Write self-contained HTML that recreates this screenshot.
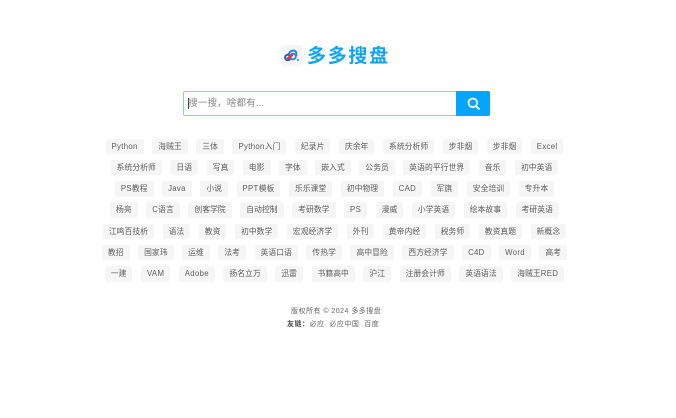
<!DOCTYPE html>
<html lang="zh"><head><meta charset="utf-8"><title>多多搜盘</title>
<style>
*{box-sizing:border-box}
html,body{margin:0;padding:0;width:676px;height:418px;overflow:hidden;background:#fff;font-family:"Liberation Sans","Noto Sans CJK SC",sans-serif}
.abs{position:absolute}
.row{position:absolute;left:0;width:669px;display:flex;justify-content:center;gap:8.5px;height:15.5px}
.row a{display:block;height:15.5px;line-height:15.5px;padding:0 6px;background:#f5f5f5;border-radius:2px;font-size:7.8px;letter-spacing:.05px;color:#5c5c5c;white-space:nowrap}
.row i{font-style:normal;letter-spacing:.32px}
</style></head><body>
<svg class="abs" style="left:281px;top:45px" width="21" height="21" viewBox="0 0 21 21">
<rect width="21" height="21" rx="3" fill="#f3f5f8"/>
<path d="M7.500 9C9 6.500 11 5.500 12.500 5.500c2.500 0 3 2.500 3 4.500" fill="none" stroke="#2d86de" stroke-width="2" stroke-linecap="round"/>
<circle cx="6.800" cy="12.500" r="2.700" fill="none" stroke="#1a64c4" stroke-width="2"/>
<circle cx="12" cy="11.500" r="2.800" fill="none" stroke="#2d86de" stroke-width="1.800"/>
<path d="M6.500 14L11 10" stroke="#ee3535" stroke-width="2.600" stroke-linecap="round"/>
<circle cx="17" cy="15" r="1" fill="#2d86de"/>
</svg>
<div class="abs" style="left:307px;top:43.500px;font-size:19px;line-height:26px;font-weight:700;letter-spacing:1.700px;color:#0fa3f5;white-space:nowrap">多多搜盘</div>

<div class="abs" style="left:183px;top:91px;width:307px;height:25px;border:1px solid #85cdfb;border-radius:2px;background:#fff"></div>
<div class="abs" style="left:188px;top:98px;width:1px;height:11px;background:#444"></div>
<div class="abs" style="left:188px;top:96px;font-size:9.700px;line-height:15px;color:#8a8a8a;white-space:nowrap">搜一搜，啥都有...</div>
<div class="abs" style="left:456px;top:91px;width:34px;height:25px;background:#03a5ff;border-radius:0 2px 2px 0"></div>
<svg class="abs" style="left:466px;top:96px" width="15" height="15" viewBox="0 0 15 15"><circle cx="6.800" cy="6.800" r="4.300" fill="none" stroke="#fff" stroke-width="1.800"/><path d="M10 10l3 3" stroke="#fff" stroke-width="1.800" stroke-linecap="round"/></svg>

<div class="row" style="top:138.500px"><a><i>Python</i></a><a>海贼王</a><a>三体</a><a><i>Python</i>入门</a><a>纪录片</a><a>庆余年</a><a>系统分析师</a><a>步非烟</a><a>步非烟</a><a><i>Excel</i></a></div>
<div class="row" style="top:159.800px"><a>系统分析师</a><a>日语</a><a>写真</a><a>电影</a><a>字体</a><a>嵌入式</a><a>公务员</a><a>英语的平行世界</a><a>音乐</a><a>初中英语</a></div>
<div class="row" style="top:181px"><a><i>PS</i>教程</a><a><i>Java</i></a><a>小说</a><a><i>PPT</i>模板</a><a>乐乐课堂</a><a>初中物理</a><a><i>CAD</i></a><a>军旗</a><a>安全培训</a><a>专升本</a></div>
<div class="row" style="top:202.300px"><a>杨亮</a><a><i>C</i>语言</a><a>创客学院</a><a>自动控制</a><a>考研数学</a><a><i>PS</i></a><a>漫威</a><a>小学英语</a><a>绘本故事</a><a>考研英语</a></div>
<div class="row" style="top:223.500px"><a>江鸣百技析</a><a>语法</a><a>教资</a><a>初中数学</a><a>宏观经济学</a><a>外刊</a><a>黄帝内经</a><a>税务师</a><a>教资真题</a><a>新概念</a></div>
<div class="row" style="top:244.800px"><a>教招</a><a>国家玮</a><a>运维</a><a>法考</a><a>英语口语</a><a>传热学</a><a>高中冒险</a><a>西方经济学</a><a><i>C4D</i></a><a><i>Word</i></a><a>高考</a></div>
<div class="row" style="top:266px"><a>一建</a><a><i>VAM</i></a><a><i>Adobe</i></a><a>扬名立万</a><a>迅雷</a><a>书籍高中</a><a>沪江</a><a>注册会计师</a><a>英语语法</a><a>海贼王<i>RED</i></a></div>

<div class="abs" style="left:291px;top:306.500px;font-size:7px;line-height:10px;letter-spacing:.48px;color:#666;white-space:nowrap">版权所有 © 2024 多多搜盘</div>
<div class="abs" style="left:287px;top:319.500px;font-size:7px;line-height:10px;letter-spacing:.5px;color:#666;white-space:nowrap"><b style="color:#444">友链：</b>必应&nbsp;&nbsp;必应中国&nbsp;&nbsp;百度</div>
</body></html>
